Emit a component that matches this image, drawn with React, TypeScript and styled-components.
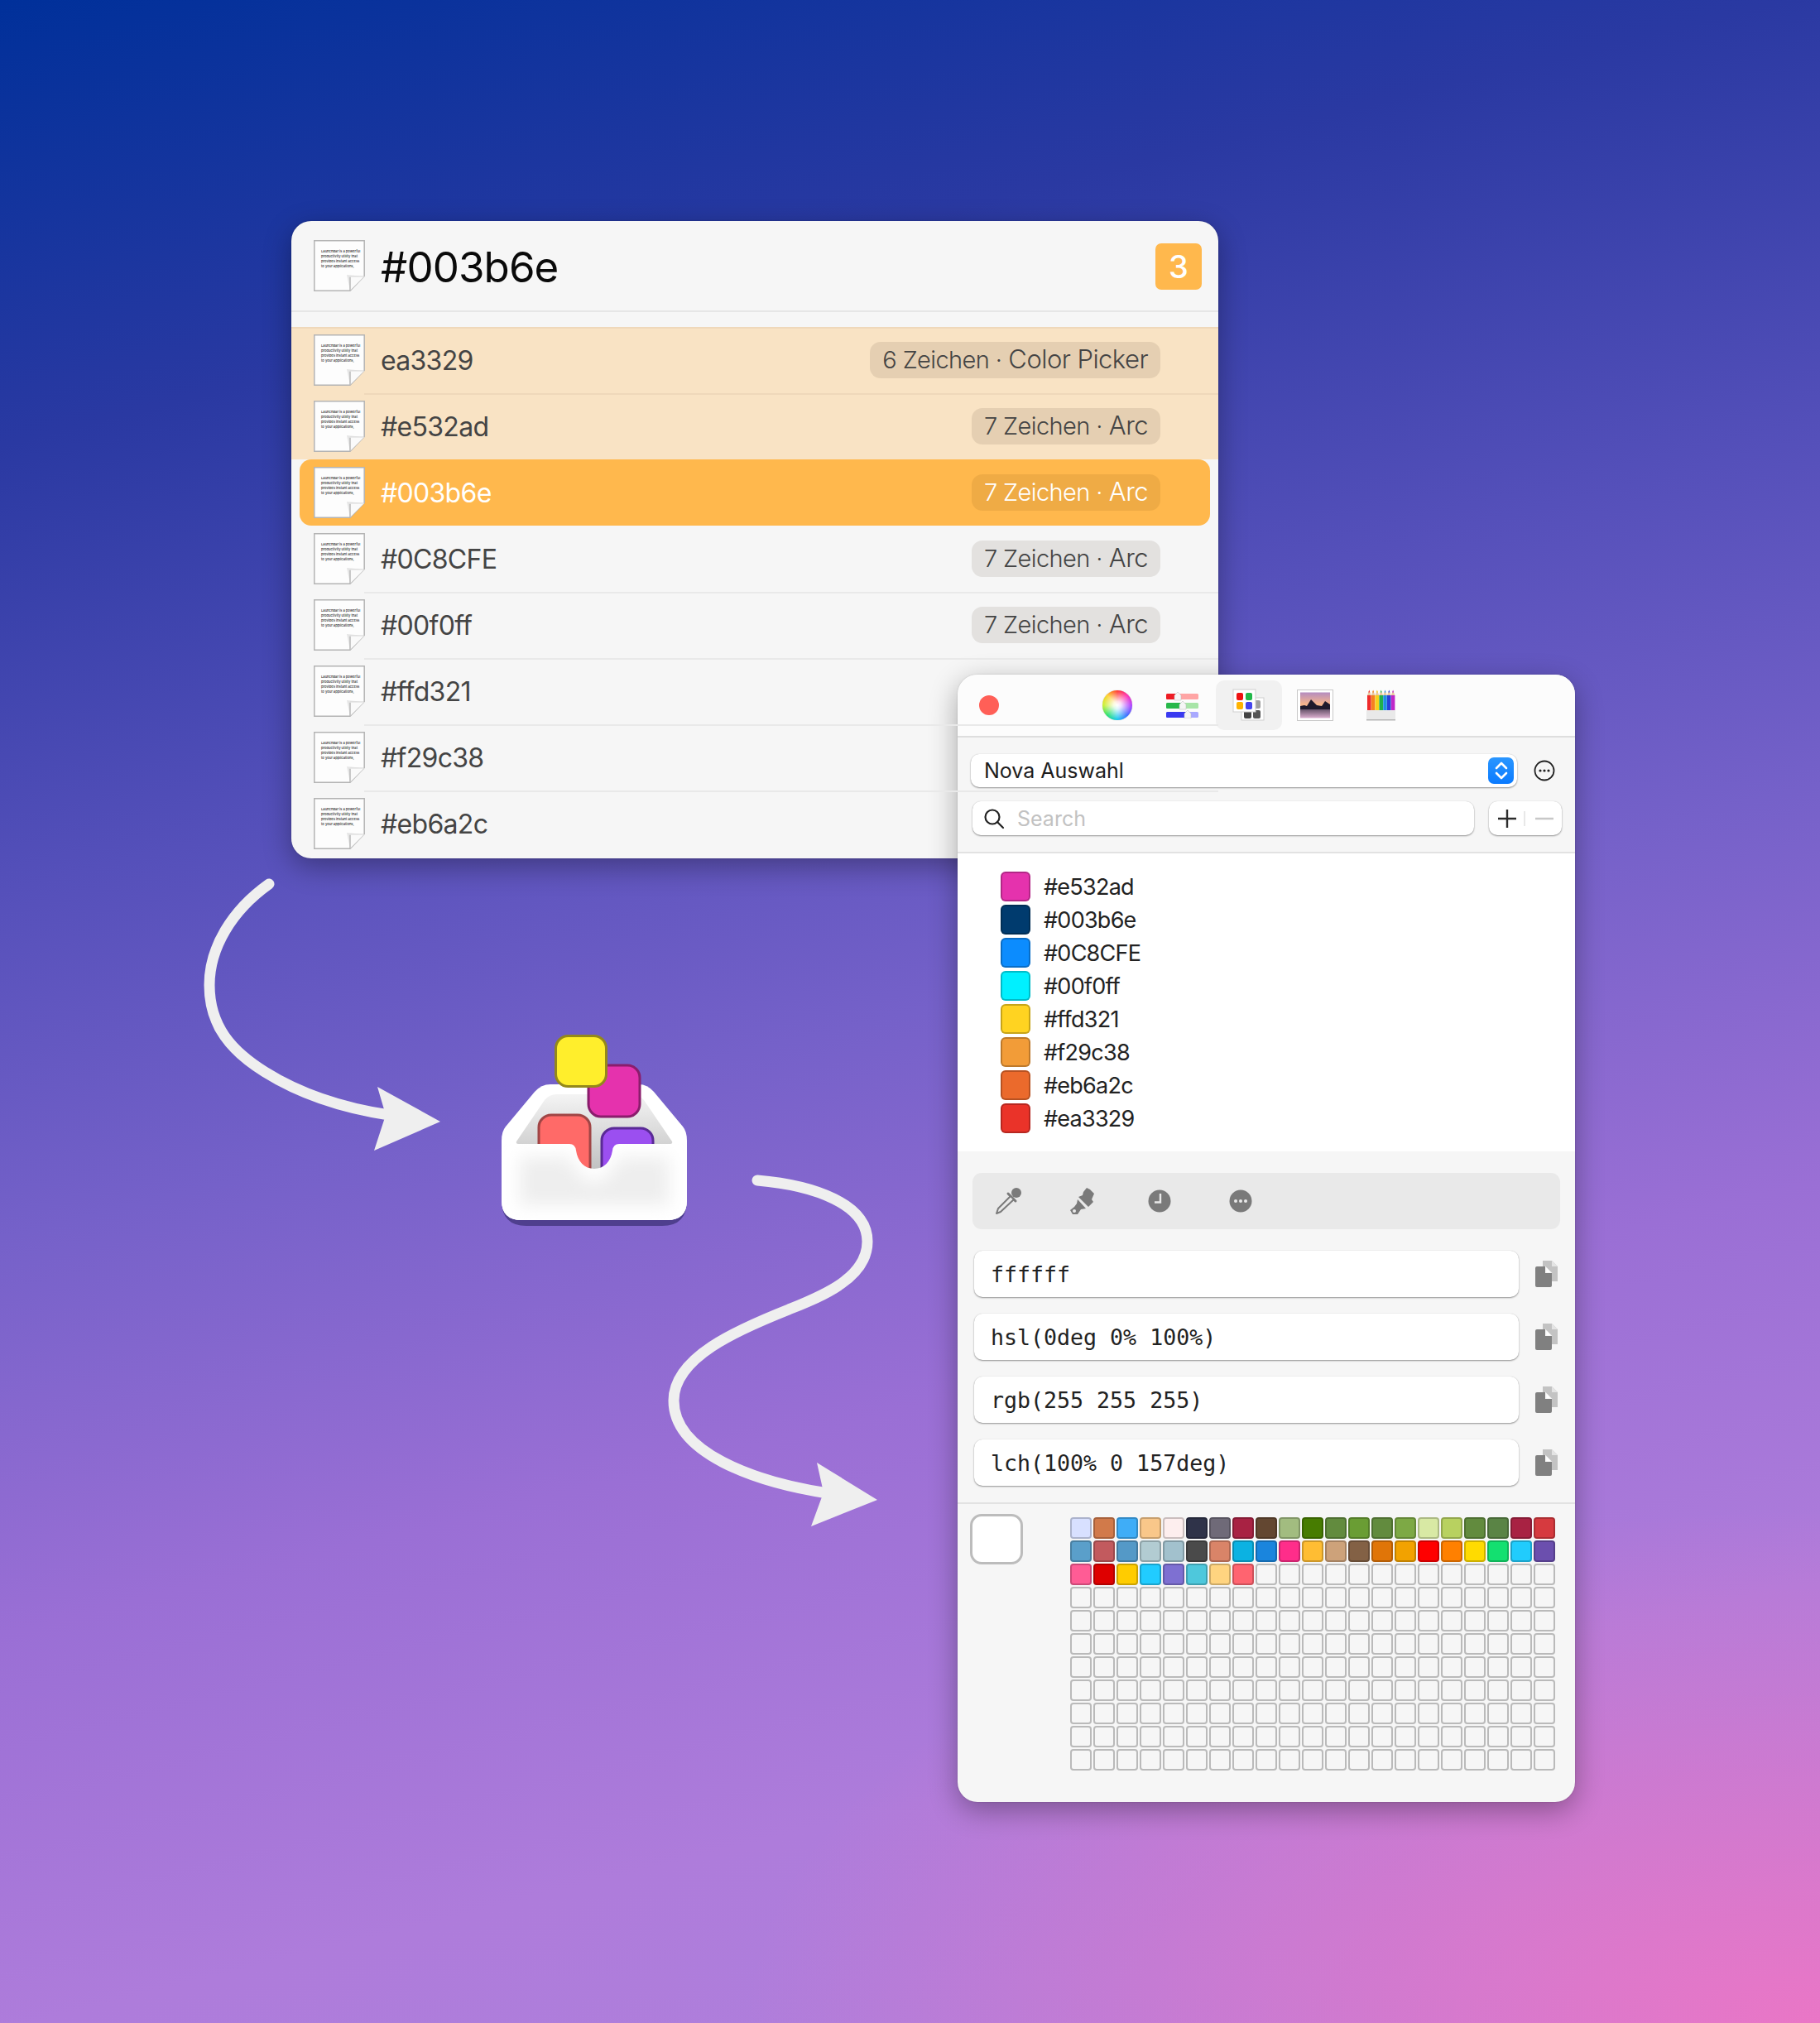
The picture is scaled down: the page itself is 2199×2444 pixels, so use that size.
import React from "react";
import styled, { createGlobalStyle } from "styled-components";

const Global = createGlobalStyle`
  html, body { margin: 0; padding: 0; }
  body { font-family: "Inter", "Liberation Sans", sans-serif; }
`;

const Canvas = styled.div`
  position: relative;
  width: 2199px;
  height: 2444px;
  overflow: hidden;
  background:
    radial-gradient(ellipse 1300px 620px at 100% 100%, #ea76c6 0%, rgba(234,118,198,0.55) 45%, rgba(234,118,198,0) 100%),
    linear-gradient(166deg, #00309a 0%, #2a39a2 18%, #5550ba 36%, #7561c9 50%, #9a6fd5 66%, #ae7cdb 82%, #b080dc 100%);
`;

const LauncherWindow = styled.section`
  position: absolute;
  left: 352px;
  top: 267px;
  width: 1120px;
  height: 770px;
  background: #f6f6f6;
  border-radius: 24px;
  overflow: hidden;
  box-shadow: 0 10px 34px rgba(0, 0, 0, 0.33), 0 0 2px rgba(0, 0, 0, 0.2);
`;

const Header = styled.header`
  display: flex;
  align-items: center;
  height: 108px;
  padding: 0 20px 0 27px;
  border-bottom: 2px solid #e6e6e6;
  margin-bottom: 18px;
`;

const HeaderTitle = styled.h1`
  flex: 1;
  margin: 2px 0 0 19px;
  font-size: 51px;
  font-weight: 400;
  color: #0a0a0a;
  letter-spacing: -0.9px;
`;

const CountBadge = styled.div`
  width: 56px;
  height: 56px;
  margin-top: 2px;
  border-radius: 7px;
  background: #ffb84d;
  color: #fff;
  font-size: 38px;
  font-weight: 500;
  display: flex;
  align-items: center;
  justify-content: center;
`;

const Row = styled.div<{ $state: "normal" | "marked" | "selected"; $first?: boolean; $line?: boolean }>`
  position: relative;
  display: flex;
  align-items: center;
  height: 80px;
  box-sizing: border-box;
  padding: ${(p) => (p.$state === "selected" ? "0 60px 0 17px" : "0 70px 0 27px")};
  margin: ${(p) => (p.$state === "selected" ? "0 10px" : "0")};
  border-radius: ${(p) => (p.$state === "selected" ? "14px" : "0")};
  background: ${(p) => (p.$state === "selected" ? "#ffb84d" : p.$state === "marked" ? "#f9e3c4" : "transparent")};
  color: ${(p) => (p.$state === "selected" ? "#fff" : "#444")};
  box-shadow: ${(p) => (p.$first ? "inset 0 2px 0 #efd8ba" : "none")};
  ${(p) =>
    p.$line
      ? `&::after {
      content: "";
      position: absolute;
      z-index: 1;
      left: 88px;
      right: 0;
      bottom: -2px;
      height: 2px;
      background: ${p.$state === "marked" ? "#efd8ba" : "#e9e9e9"};
    }`
      : ""}
`;

const RowLabel = styled.span`
  flex: 1;
  margin: 1px 0 0 19px;
  font-size: 32px;
  font-weight: 400;
  letter-spacing: -0.7px;
`;

const Pill = styled.span<{ $selected?: boolean }>`
  height: 44px;
  padding: 0 15px;
  display: flex;
  align-items: baseline;
  line-height: 42px;
  gap: 8px;
  border-radius: 13px;
  font-weight: 300;
  background: ${(p) => (p.$selected ? "rgba(120,80,20,0.12)" : "rgba(60,40,20,0.1)")};
`;

const PillMeta = styled.span`
  font-size: 29px;
  letter-spacing: -0.6px;
`;

const PillApp = styled.span`
  font-size: 31px;
  letter-spacing: -0.55px;
`;

const DocSvg = styled.svg`
  flex: none;
  width: 62px;
  height: 62px;
`;

const DocText = styled.text`
  font-family: "Inter", sans-serif;
  font-size: 4.1px;
  font-weight: 500;
  fill: #2a2a2a;
`;

const DocIcon = () => (
  <DocSvg viewBox="0 0 62 62">
    <path d="M0.8 0.8H61.2V43.5L44 61.2H0.8Z" fill="#fdfdfd" stroke="#b4b4b4" strokeWidth="1.5" />
    <DocText x="9" y="15">LaunchBar is a powerful</DocText>
    <DocText x="9" y="21">productivity utility that</DocText>
    <DocText x="9" y="27">provides instant access</DocText>
    <DocText x="9" y="33">to your applications,</DocText>
    <path d="M40 42L44 61V44H61Z" fill="#e6e6e6" />
    <path d="M44 44H61L44 61Z" fill="#fafafa" stroke="#d8d8d8" strokeWidth="1" />
    <path d="M44 45V61" stroke="#aaa" strokeWidth="1" />
  </DocSvg>
);

const Overlay = styled.svg`
  position: absolute;
  left: 0;
  top: 0;
  width: 2199px;
  height: 2444px;
  pointer-events: none;
`;

const PickerWindow = styled.section`
  position: absolute;
  left: 1157px;
  top: 815px;
  width: 746px;
  height: 1362px;
  display: flex;
  flex-direction: column;
  background: #f6f6f6;
  border-radius: 24px;
  overflow: hidden;
  box-shadow: 0 10px 34px rgba(0, 0, 0, 0.33), 0 0 2px rgba(0, 0, 0, 0.2);
`;

const TitleBar = styled.div`
  display: flex;
  align-items: center;
  height: 74px;
  flex: none;
  background: #fcfcfc;
  border-bottom: 2px solid #dedede;
  padding-left: 26px;
`;

const CloseDot = styled.span`
  width: 24px;
  height: 24px;
  border-radius: 50%;
  background: #ff5f57;
  margin-right: 102px;
`;

const ToolTab = styled.div<{ $active?: boolean }>`
  width: 80px;
  height: 60px;
  display: flex;
  align-items: center;
  justify-content: center;
  border-radius: 10px;
  background: ${(p) => (p.$active ? "#f1f1f1" : "transparent")};
`;

const Wheel = styled.span`
  width: 36px;
  height: 36px;
  margin-left: 1px;
  border-radius: 50%;
  background:
    radial-gradient(circle, #fff 0%, rgba(255, 255, 255, 0.85) 18%, rgba(255, 255, 255, 0) 68%),
    conic-gradient(#ff3b30, #ff2fb0, #b040ff, #3c6cff, #19c8f0, #28e070, #c8f030, #ffd02c, #ff3b30);
  box-shadow: 0 0 1px rgba(0, 0, 0, 0.4);
`;

const Controls = styled.div`
  flex: none;
  display: flex;
  flex-direction: column;
  height: 118px;
  padding: 20px 16px 0;
  gap: 17px;
  border-bottom: 2px solid #e2e2e2;
`;

const ControlRow = styled.div`
  display: flex;
  align-items: center;
`;

const whiteField = `
  background: #fff;
  box-shadow: 0 1px 2px rgba(0,0,0,0.4), 0 0 1px rgba(0,0,0,0.18);
  box-sizing: border-box;
`;

const SelectBox = styled.div`
  ${whiteField}
  width: 660px;
  height: 40px;
  border-radius: 10px;
  display: flex;
  align-items: center;
  justify-content: space-between;
  padding: 0 4px 0 16px;
  font-size: 25px;
  color: #1d1d1d;
`;

const Stepper = styled.span`
  width: 31px;
  height: 32px;
  border-radius: 7px;
  background: linear-gradient(#2a96ff, #0b7bff);
  display: flex;
  align-items: center;
  justify-content: center;
`;

const MoreSvg = styled.svg`
  margin-left: 20px;
`;

const SearchBox = styled.div`
  ${whiteField}
  margin-left: 2px;
  width: 606px;
  height: 41px;
  border-radius: 10px;
  display: flex;
  align-items: center;
  padding-left: 13px;
  gap: 15px;
  font-size: 25px;
  color: #c2c2c2;
`;

const PlusMinus = styled.div`
  ${whiteField}
  margin-left: 18px;
  width: 88px;
  height: 41px;
  border-radius: 10px;
  display: flex;
  align-items: center;
  justify-content: center;
`;

const ColorList = styled.ul`
  flex: none;
  list-style: none;
  margin: 0;
  padding: 22px 0 0 52px;
  box-sizing: border-box;
  height: 360px;
  background: #fff;
  display: flex;
  flex-direction: column;
  gap: 4px;
`;

const ColorItem = styled.li`
  display: flex;
  align-items: center;
  height: 36px;
  gap: 16px;
  font-size: 27px;
  letter-spacing: -0.75px;
  color: #222;
`;

const Swatch = styled.span<{ $color: string }>`
  width: 36px;
  height: 36px;
  border-radius: 6px;
  box-sizing: border-box;
  background: ${(p) => p.$color};
  box-shadow: inset 0 0 0 2px rgba(0, 0, 0, 0.22);
`;

const ValuesPanel = styled.div`
  flex: none;
  display: flex;
  flex-direction: column;
  padding: 26px 18px 20px 20px;
  gap: 20px;
  border-bottom: 2px solid #e2e2e2;
`;

const ModeBar = styled.div`
  margin: 0 0 6px -2px;
  height: 68px;
  border-radius: 11px;
  background: #e9e9e9;
  display: flex;
  align-items: center;
`;

const ModeIcon = styled.svg<{ $left: number }>`
  margin-left: ${(p) => p.$left}px;
`;

const ValueRow = styled.div`
  display: flex;
  align-items: center;
  gap: 20px;
`;

const ValueField = styled.div`
  ${whiteField}
  width: 658px;
  height: 56px;
  border-radius: 10px;
  display: flex;
  align-items: center;
  padding-left: 20px;
  font-family: "DejaVu Sans Mono", "Liberation Mono", monospace;
  font-size: 26.6px;
  color: #222;
`;

const Footer = styled.div`
  flex: 1;
  display: flex;
  align-items: flex-start;
  padding: 12px 0 0 15px;
  gap: 57px;
`;

const BigWell = styled.div`
  width: 64px;
  height: 61px;
  box-sizing: border-box;
  background: #fff;
  border: 3px solid #bcbcbc;
  border-radius: 14px;
`;

const WellGrid = styled.div`
  margin-top: 4px;
  display: grid;
  grid-template-columns: repeat(21, 26px);
  grid-auto-rows: 26px;
  gap: 2px;
`;

const Cell = styled.span<{ $color?: string }>`
  box-sizing: border-box;
  border-radius: 4px;
  background: ${(p) => p.$color || "transparent"};
  border: 2px solid ${(p) => (p.$color ? "rgba(0,0,0,0.2)" : "#bababa")};
`;

type LauncherRow = { t: string; n?: string; a?: string; s: "normal" | "marked" | "selected" };

const launcherRows: LauncherRow[] = [
  { t: "ea3329", n: "6 Zeichen ·", a: "Color Picker", s: "marked" },
  { t: "#e532ad", n: "7 Zeichen ·", a: "Arc", s: "marked" },
  { t: "#003b6e", n: "7 Zeichen ·", a: "Arc", s: "selected" },
  { t: "#0C8CFE", n: "7 Zeichen ·", a: "Arc", s: "normal" },
  { t: "#00f0ff", n: "7 Zeichen ·", a: "Arc", s: "normal" },
  { t: "#ffd321", s: "normal" },
  { t: "#f29c38", s: "normal" },
  { t: "#eb6a2c", s: "normal" },
];

const listColors: [string, string][] = [
  ["#e532ad", "#e532ad"],
  ["#003b6e", "#003b6e"],
  ["#0C8CFE", "#0c8cfe"],
  ["#00f0ff", "#00f0ff"],
  ["#ffd321", "#ffd321"],
  ["#f29c38", "#f29c38"],
  ["#eb6a2c", "#eb6a2c"],
  ["#ea3329", "#ea3329"],
];

const values = ["ffffff", "hsl(0deg 0% 100%)", "rgb(255 255 255)", "lch(100% 0 157deg)"];

const wellColors = [
  "#d8e0ff", "#d17a4a", "#3fadf7", "#f9c78a", "#fdeeee", "#2f3349", "#6f6a78", "#a82243", "#634731", "#a2bc80", "#477c01",
  "#628b3e", "#6a9d34", "#628b3e", "#7da945", "#d8e9a4", "#b8d160", "#628b3e", "#5a8445", "#a82243", "#d63a3f",
  "#5a9fca", "#c25a5e", "#5499c7", "#b2ccd2", "#a2c1cd", "#4a4a4a", "#d98468", "#0bb2e2", "#1a85dd", "#ff2d8a", "#ffbd33",
  "#cda27a", "#836145", "#e07508", "#f2a200", "#ff0000", "#ff8000", "#ffdb00", "#13e070", "#21ccfd", "#6b4fae",
  "#ff5c95", "#de0000", "#ffcc00", "#21ccff", "#7e70d2", "#4ec8dc", "#ffd480", "#ff6470",
];
const cells = Array.from({ length: 21 * 11 }, (_, i) => wellColors[i]);

const SlidersIcon = () => (
  <svg width="42" height="32" viewBox="0 0 42 32">
    <rect x="1" y="2" width="39" height="7" rx="1.5" fill="#ffa5a5" />
    <rect x="1" y="2" width="14" height="7" rx="1.5" fill="#ee1c24" />
    <rect x="1" y="13" width="39" height="7" rx="1.5" fill="#a8e5a8" />
    <rect x="1" y="13" width="20" height="7" rx="1.5" fill="#27b84a" />
    <rect x="1" y="24" width="39" height="7" rx="1.5" fill="#a9a9ff" />
    <rect x="1" y="24" width="26" height="7" rx="1.5" fill="#3a3af0" />
    <path d="M11 10V4l4-4 4 4v6ZM17 21v-6l4-4 4 4v6ZM23 32v-6l4-4 4 4v6Z" fill="#f6f6f6" stroke="#bbb" strokeWidth=".5" />
  </svg>
);

const PaletteIcon = () => (
  <svg width="40" height="40" viewBox="0 0 40 40">
    <rect x="11" y="11" width="27" height="27" fill="#fff" stroke="#cfcfcf" />
    <rect x="25" y="14" width="9" height="10" rx="2" fill="#a0a0a0" />
    <rect x="14" y="26" width="9" height="10" rx="2" fill="#444" />
    <rect x="25" y="26" width="9" height="10" rx="2" fill="#555" />
    <rect x="1" y="1" width="27" height="27" fill="#fff" stroke="#cfcfcf" />
    <rect x="5" y="5" width="8" height="9" rx="2" fill="#ee1111" />
    <rect x="16" y="5" width="8" height="9" rx="2" fill="#22b84a" />
    <rect x="5" y="16" width="8" height="9" rx="2" fill="#ffb300" />
    <rect x="16" y="16" width="8" height="9" rx="2" fill="#4444ee" />
  </svg>
);

const ImageIcon = () => (
  <svg width="44" height="38" viewBox="0 0 44 38">
    <defs>
      <linearGradient id="sunset" x1="0" y1="0" x2="0" y2="1">
        <stop offset="0" stopColor="#b48cc0" />
        <stop offset=".45" stopColor="#f5b48c" />
        <stop offset=".62" stopColor="#f5b48c" />
        <stop offset=".63" stopColor="#5c4a60" />
        <stop offset="1" stopColor="#dcb0d0" />
      </linearGradient>
    </defs>
    <rect x=".5" y=".5" width="43" height="37" fill="#fff" stroke="#c9c9c9" />
    <rect x="4" y="3.5" width="36" height="31" fill="url(#sunset)" />
    <path d="M4 20L9 19 12 20 17 12 24 19 30 20 34 14 40 18V24H4Z" fill="#1f1a2c" />
  </svg>
);

const PencilsIcon = () => (
  <svg width="36" height="38" viewBox="0 0 36 38">
    {["#ef2b2b", "#f5811f", "#f7d21c", "#21b14a", "#1f8fe0", "#2a3fd8", "#c028c8"].map((c, i) => (
      <g key={c}>
        <rect x={1 + i * 4.8} y={7} width={4.6} height={20} fill={c} />
        <path d={`M${1 + i * 4.8} 7l2.3-6 2.3 6Z`} fill="#e8c8a0" />
        <path d={`M${2.3 + i * 4.8} 3.6l1-3 1 3Z`} fill={c} />
      </g>
    ))}
    <rect x="0" y="25" width="35" height="11" fill="#e9e9e9" />
    <rect x="0" y="36" width="35" height="1.5" fill="#b5b5b5" />
  </svg>
);

const CopyIcon = () => (
  <svg width="27" height="32" viewBox="0 0 27 32">
    <path d="M9 0H20L27 7V25H9Z" fill="#c3c3c3" />
    <path d="M20 0L27 7H20Z" fill="#e4e4e4" />
    <path d="M2 7H12L20 15V30a2 2 0 0 1-2 2H2a2 2 0 0 1-2-2V9a2 2 0 0 1 2-2Z" fill="#808080" />
    <path d="M12 6.5L20.5 15H12Z" fill="#f6f6f6" />
    <path d="M13.5 8.5L18.5 14H13.5Z" fill="#fff" />
  </svg>
);

const frontPath =
  "M606 1382H688Q695 1382 696 1390C698 1403 706 1412 718 1412C730 1412 738 1403 740 1390Q741 1382 748 1382H830V1450Q830 1474 806 1474H630Q606 1474 606 1450Z";

const AppIcon = () => (
  <g>
    <defs>
      <linearGradient id="hole" x1="0" y1="0" x2="0" y2="1">
        <stop offset="0" stopColor="#f4f4f4" />
        <stop offset="1" stopColor="#bdbdbd" />
      </linearGradient>
      <filter id="soft" x="-20%" y="-30%" width="140%" height="160%">
        <feGaussianBlur stdDeviation="10" />
      </filter>
      <clipPath id="front">
        <path d={frontPath} />
      </clipPath>
    </defs>
    <path d="M660 1317H777Q785 1317 795 1326L825 1368Q830 1374 830 1385V1450Q830 1481 800 1481H636Q606 1481 606 1450V1385Q606 1374 611 1368L641 1326Q651 1317 660 1317Z" fill="#4f3f8e" />
    <path d="M665 1310H772Q782 1310 790 1319L825 1361Q830 1367 830 1378V1450Q830 1474 806 1474H630Q606 1474 606 1450V1378Q606 1367 611 1361L646 1319Q654 1310 665 1310Z" fill="#fff" />
    <path d="M672 1322H764Q772 1322 778 1329L812 1379Q813 1382 810 1382V1420H626V1382Q623 1382 624 1379L658 1329Q664 1322 672 1322Z" fill="url(#hole)" />
    <rect x="651" y="1347" width="62" height="80" rx="15" fill="#ff6a68" stroke="#a04545" strokeWidth="3" />
    <rect x="727" y="1363" width="62" height="80" rx="15" fill="#9b4ff0" stroke="#5a2a96" strokeWidth="3" />
    <path d={frontPath} fill="#fff" />
    <g clipPath="url(#front)">
      <path d="M628 1398H688Q702 1428 718 1428Q734 1428 748 1398H808V1456H628Z" fill="#eeeeee" filter="url(#soft)" />
    </g>
    <rect x="711" y="1287" width="62" height="62" rx="15" fill="#e532ad" stroke="#8a1d6c" strokeWidth="3" />
    <rect x="671.5" y="1251.5" width="61" height="61" rx="15" fill="#ffee2c" stroke="#94881a" strokeWidth="3" />
  </g>
);

export default function App() {
  return (
    <Canvas>
      <Global />
      <LauncherWindow>
        <Header>
          <DocIcon />
          <HeaderTitle>#003b6e</HeaderTitle>
          <CountBadge>3</CountBadge>
        </Header>
        {launcherRows.map((r, i) => (
          <Row key={r.t} $state={r.s} $first={i === 0} $line={i !== 1 && i !== 2 && i !== 7}>
            <DocIcon />
            <RowLabel>{r.t}</RowLabel>
            {r.n && (
              <Pill $selected={r.s === "selected"}>
                <PillMeta>{r.n}</PillMeta>
                <PillApp>{r.a}</PillApp>
              </Pill>
            )}
          </Row>
        ))}
      </LauncherWindow>

      <Overlay viewBox="0 0 2199 2444">
        <path d="M325 1068C280 1100 253 1145 253 1190C253 1240 280 1270 320 1295C360 1320 410 1338 470 1347" fill="none" stroke="#efefef" strokeWidth="13" strokeLinecap="round" />
        <path d="M456 1313L532 1355L452 1390L466 1347Z" fill="#efefef" />
        <path d="M915 1426C985 1432 1048 1455 1048 1500C1048 1545 990 1567 953 1582C890 1607 814 1640 814 1692C814 1755 910 1790 1000 1804" fill="none" stroke="#efefef" strokeWidth="13" strokeLinecap="round" />
        <path d="M987 1767L1060 1812L980 1844L995 1803Z" fill="#efefef" />
        <AppIcon />
      </Overlay>

      <PickerWindow>
        <TitleBar>
          <CloseDot />
          <ToolTab><Wheel /></ToolTab>
          <ToolTab><SlidersIcon /></ToolTab>
          <ToolTab $active><PaletteIcon /></ToolTab>
          <ToolTab><ImageIcon /></ToolTab>
          <ToolTab><PencilsIcon /></ToolTab>
        </TitleBar>
        <Controls>
          <ControlRow>
            <SelectBox>
              Nova Auswahl
              <Stepper>
                <svg width="18" height="26" viewBox="0 0 18 26" fill="none" stroke="#fff" strokeWidth="2.6" strokeLinecap="round" strokeLinejoin="round">
                  <path d="M3 10L9 4L15 10" />
                  <path d="M3 16L9 22L15 16" />
                </svg>
              </Stepper>
            </SelectBox>
            <MoreSvg width="26" height="26" viewBox="0 0 26 26">
              <circle cx="13" cy="13" r="11.5" fill="none" stroke="#222" strokeWidth="1.8" />
              <circle cx="8" cy="13" r="1.6" fill="#222" />
              <circle cx="13" cy="13" r="1.6" fill="#222" />
              <circle cx="18" cy="13" r="1.6" fill="#222" />
            </MoreSvg>
          </ControlRow>
          <ControlRow>
            <SearchBox>
              <svg width="26" height="26" viewBox="0 0 26 26" fill="none" stroke="#222" strokeWidth="2.2" strokeLinecap="round">
                <circle cx="11" cy="11" r="8.5" />
                <path d="M17 17L24 24" />
              </svg>
              Search
            </SearchBox>
            <PlusMinus>
              <svg width="76" height="30" viewBox="0 0 76 30" fill="none" strokeWidth="2.4">
                <path d="M16 4V26M5 15H27" stroke="#2c2c2c" />
                <path d="M37 6V24" stroke="#e0e0e0" strokeWidth="1.5" />
                <path d="M50 15H72" stroke="#c8c8c8" />
              </svg>
            </PlusMinus>
          </ControlRow>
        </Controls>
        <ColorList>
          {listColors.map(([label, c]) => (
            <ColorItem key={label}>
              <Swatch $color={c} />
              {label}
            </ColorItem>
          ))}
        </ColorList>
        <ValuesPanel>
          <ModeBar>
            <ModeIcon $left={26} width="34" height="34" viewBox="0 0 34 34">
              <circle cx="27" cy="7" r="6" fill="#7a7a7a" />
              <path d="M17 8L26 17" stroke="#7a7a7a" strokeWidth="3" strokeLinecap="round" />
              <path d="M20 11L24 15L8 30L3 32L5 26Z" fill="#e9e9e9" stroke="#7a7a7a" strokeWidth="2" strokeLinejoin="round" />
            </ModeIcon>
            <ModeIcon $left={58} width="32" height="34" viewBox="0 0 32 34">
              <path d="M16 6L20 1L24 3L29 8L26 15L28 18L22 24L10 12L15 10Z" fill="#7a7a7a" />
              <path d="M9 15L19 26L13 27L9 33L3 33L0 28L5 24L8 20Z" fill="#7a7a7a" />
              <circle cx="5" cy="29" r="2" fill="#e9e9e9" />
            </ModeIcon>
            <ModeIcon $left={62} width="28" height="28" viewBox="0 0 28 28">
              <circle cx="14" cy="14" r="13.5" fill="#7a7a7a" />
              <path d="M15 5V15.5H8" fill="none" stroke="#e9e9e9" strokeWidth="2.4" />
            </ModeIcon>
            <ModeIcon $left={70} width="28" height="28" viewBox="0 0 28 28">
              <circle cx="14" cy="14" r="13.5" fill="#7a7a7a" />
              <circle cx="8" cy="14" r="2" fill="#e9e9e9" />
              <circle cx="14" cy="14" r="2" fill="#e9e9e9" />
              <circle cx="20" cy="14" r="2" fill="#e9e9e9" />
            </ModeIcon>
          </ModeBar>
          {values.map((v) => (
            <ValueRow key={v}>
              <ValueField>{v}</ValueField>
              <CopyIcon />
            </ValueRow>
          ))}
        </ValuesPanel>
        <Footer>
          <BigWell />
          <WellGrid>
            {cells.map((c, i) => (
              <Cell key={i} $color={c} />
            ))}
          </WellGrid>
        </Footer>
      </PickerWindow>
    </Canvas>
  );
}
